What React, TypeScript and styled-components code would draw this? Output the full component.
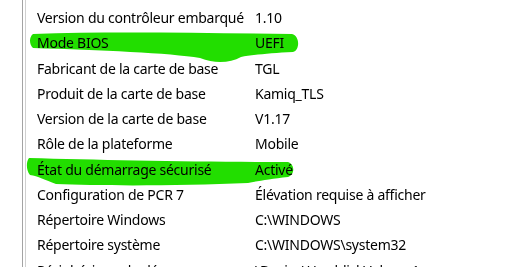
import React from "react";
import styled, { createGlobalStyle } from "styled-components";

const GlobalStyle = createGlobalStyle`
  html, body {
    margin: 0;
    padding: 0;
    background: #ffffff;
  }
  body {
    font-family: "Noto Sans", "Open Sans", sans-serif;
    color: #000000;
    overflow: hidden;
  }
`;

type Item = { name: string; value: string };

const items: Item[] = [
  { name: "Version du contrôleur embarqué", value: "1.10" },
  { name: "Mode BIOS", value: "UEFI" },
  { name: "Fabricant de la carte de base", value: "TGL" },
  { name: "Produit de la carte de base", value: "Kamiq_TLS" },
  { name: "Version de la carte de base", value: "V1.17" },
  { name: "Rôle de la plateforme", value: "Mobile" },
  { name: "État du démarrage sécurisé", value: "Activé" },
  { name: "Configuration de PCR 7", value: "Élévation requise à afficher" },
  { name: "Répertoire Windows", value: "C:\\WINDOWS" },
  { name: "Répertoire système", value: "C:\\WINDOWS\\system32" },
  { name: "Périphérique de démarrage", value: "\\Device\\HarddiskVolume1" },
];

export default function App() {
  return (
    <>
      <GlobalStyle />
      <Page>
        <Frame>
          <List>
            {items.map((it) => (
              <Row key={it.name}>
                <Name>{it.name}</Name>
                <Value>{it.value}</Value>
              </Row>
            ))}
          </List>
        </Frame>
        <Marks viewBox="0 0 522 267" width={522} height={267}>
          <path d="M33,34 C110,31 200,33 292,34 C300,36 300,50 293,52 C270,53 252,55 241,57 C230,63 215,64 200,58 C170,53 100,50 33,48 C29,44 29,37 33,34 Z" />
          <path d="M29,158 C100,160 200,162 288,162 C295,164 295,175 288,177 C270,179 258,181 248,183 C180,186 100,186 56,184 C45,180 38,176 30,175 C26,170 26,162 29,158 Z" />
        </Marks>
      </Page>
    </>
  );
}

const Page = styled.div`
  position: relative;
  width: 522px;
  height: 267px;
  overflow: hidden;
`;

const Frame = styled.div`
  margin-left: 22px;
  height: 100%;
  border-left: 1px solid #a4a4a4;
  padding-left: 2px;
`;

const List = styled.div`
  height: 100%;
  border-left: 1px solid #d0d0d0;
  padding-top: 5px;
`;

const Row = styled.div`
  display: grid;
  grid-template-columns: 218px 1fr;
  height: 25.25px;
  align-items: center;
  padding-left: 11px;
  font-size: 14px;
  letter-spacing: -0.25px;
  white-space: nowrap;
`;

const Name = styled.span``;

const Value = styled.span``;

const Marks = styled.svg`
  position: absolute;
  left: 0;
  top: 0;
  pointer-events: none;
  mix-blend-mode: multiply;

  path {
    fill: #22de00;
  }
`;
